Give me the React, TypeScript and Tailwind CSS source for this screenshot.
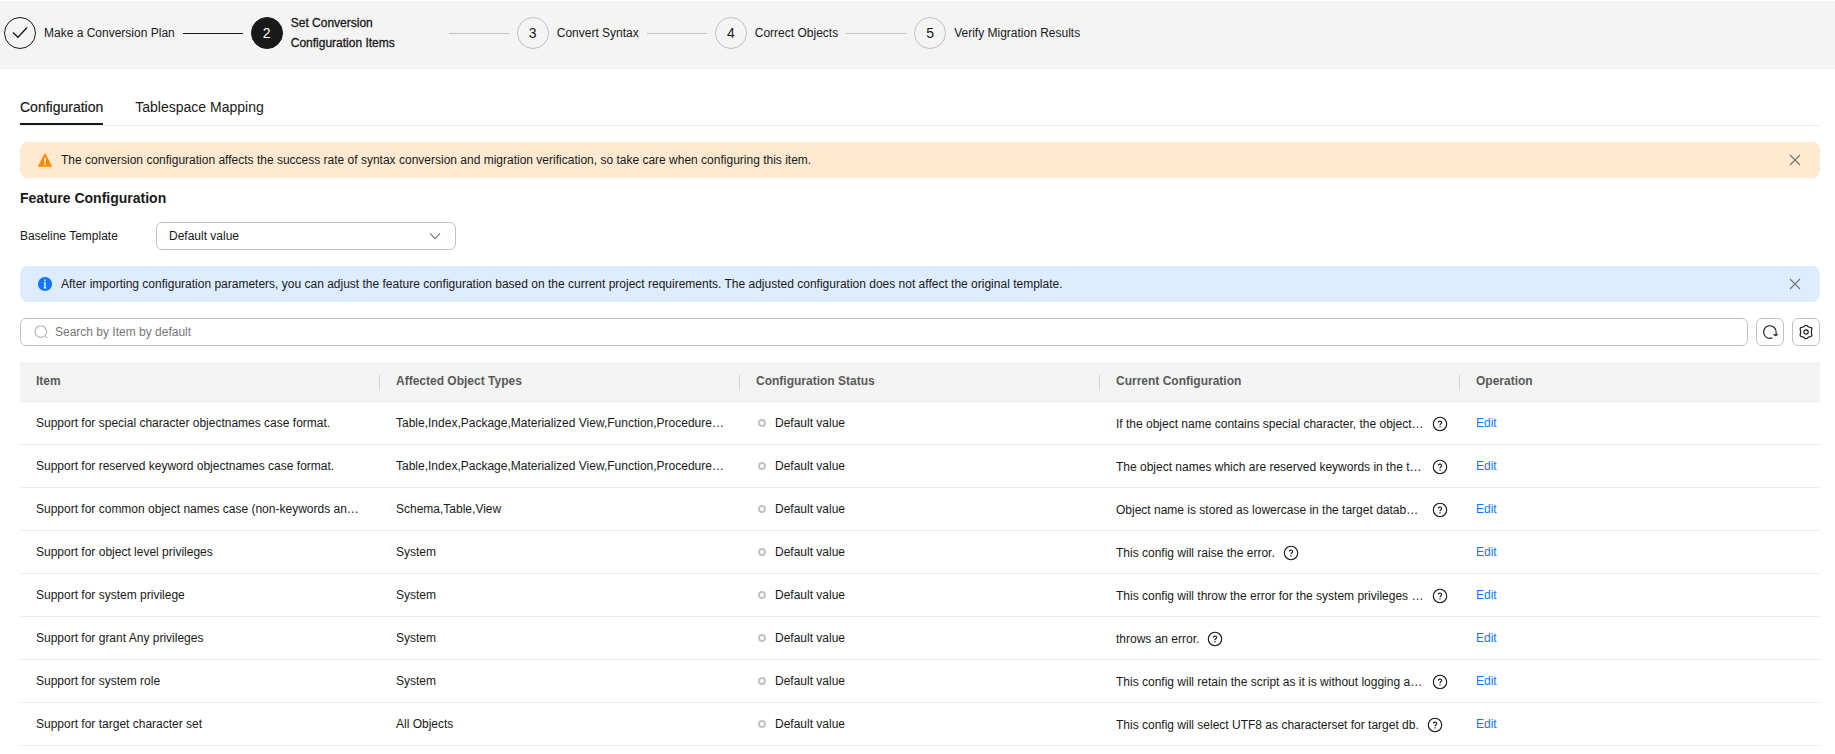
import { JSX, ReactNode, useState } from "react";

type StepState = "done" | "active" | "todo";

interface Step {
  label: string;
  state: StepState;
}

interface ConfigItem {
  name: string;
  objectTypes: string;
  current: string;
}

const steps: Step[] = [
  { label: "Make a Conversion Plan", state: "done" },
  { label: "Set Conversion Configuration Items", state: "active" },
  { label: "Convert Syntax", state: "todo" },
  { label: "Correct Objects", state: "todo" },
  { label: "Verify Migration Results", state: "todo" },
];

const columns: string[] = [
  "Item",
  "Affected Object Types",
  "Configuration Status",
  "Current Configuration",
  "Operation",
];

const items: ConfigItem[] = [
  {
    name: "Support for special character objectnames case format.",
    objectTypes: "Table,Index,Package,Materialized View,Function,Procedure…",
    current: "If the object name contains special character, the object…",
  },
  {
    name: "Support for reserved keyword objectnames case format.",
    objectTypes: "Table,Index,Package,Materialized View,Function,Procedure…",
    current: "The object names which are reserved keywords in the t…",
  },
  {
    name: "Support for common object names case (non-keywords an…",
    objectTypes: "Schema,Table,View",
    current: "Object name is stored as lowercase in the target datab…",
  },
  {
    name: "Support for object level privileges",
    objectTypes: "System",
    current: "This config will raise the error.",
  },
  {
    name: "Support for system privilege",
    objectTypes: "System",
    current: "This config will throw the error for the system privileges …",
  },
  {
    name: "Support for grant Any privileges",
    objectTypes: "System",
    current: "throws an error.",
  },
  {
    name: "Support for system role",
    objectTypes: "System",
    current: "This config will retain the script as it is without logging a…",
  },
  {
    name: "Support for target character set",
    objectTypes: "All Objects",
    current: "This config will select UTF8 as characterset for target db.",
  },
];

const circleStyles: Record<StepState, string> = {
  done: "border-[#191919]",
  active: "border-[#191919] bg-[#191919] text-white",
  todo: "border-[#c2c2c2]",
};

function CheckIcon(): JSX.Element {
  return (
    <svg width="16" height="16" viewBox="0 0 16 16" fill="none" stroke="#191919" strokeWidth="1.4">
      <path d="M1 7.6 L6 12.2 L15 2.6" />
    </svg>
  );
}

function WarningIcon(): JSX.Element {
  return (
    <svg width="16" height="16" viewBox="0 0 16 16">
      <path d="M8 1.8 L14.6 14.2 H1.4 Z" fill="#ff8800" stroke="#ff8800" strokeWidth="1" strokeLinejoin="round" />
      <path d="M8 6 V10.4 M8 11.5 V13" stroke="#fff" strokeWidth="1.6" />
    </svg>
  );
}

function InfoIcon(): JSX.Element {
  return (
    <svg width="16" height="16" viewBox="0 0 16 16">
      <circle cx="8" cy="8" r="7.1" fill="#1476ff" />
      <path d="M8 3.6 V5.2 M6.8 6.9 H8 V11.6 M6.8 11.8 H9.2" stroke="#fff" strokeWidth="1.3" fill="none" />
    </svg>
  );
}

function CloseIcon(): JSX.Element {
  return (
    <svg width="12" height="12" viewBox="0 0 12 12" stroke="#777" strokeWidth="1.2">
      <path d="M1 1 L11 11 M11 1 L1 11" />
    </svg>
  );
}

function HelpIcon(): JSX.Element {
  return (
    <svg width="16" height="16" viewBox="0 0 16 16" fill="none" stroke="#191919">
      <circle cx="8" cy="8" r="6.7" strokeWidth="1.1" />
      <path d="M6.3 6.6 C6.3 4.6 9.7 4.6 9.7 6.5 C9.7 7.7 8 7.8 8 9.3" strokeWidth="1.1" />
      <path d="M8 10.2 V11.4" strokeWidth="1.2" />
    </svg>
  );
}

function Alert({ tone, icon, children }: { tone: string; icon: ReactNode; children: ReactNode }): JSX.Element {
  return (
    <div role="alert" className={`flex h-9 items-center gap-2 rounded-lg pl-[17px] pr-[19px] ${tone}`}>
      {icon}
      <p className="flex-1">{children}</p>
      <button type="button" aria-label="Close" className="cursor-pointer">
        <CloseIcon />
      </button>
    </div>
  );
}

function Stepper(): JSX.Element {
  return (
    <ol className="mt-px flex items-center gap-2 bg-[#f4f4f4] pt-3 pb-4 pl-1">
      {steps.map((step, index) => (
        <li key={step.label} className="flex h-10 items-center gap-2">
          <span
            className={`flex size-8 shrink-0 items-center justify-center rounded-full border text-sm ${circleStyles[step.state]}`}
          >
            {step.state === "done" ? <CheckIcon /> : index + 1}
          </span>
          <span
            className={`max-w-[150px] leading-5 ${
              step.state === "active" ? "[-webkit-text-stroke:0.3px_#191919]" : ""
            }`}
          >
            {step.label}
          </span>
          {index < steps.length - 1 && (
            <span className={`h-px w-15 shrink-0 ${step.state === "done" ? "bg-[#191919]" : "bg-[#c2c2c2]"}`} />
          )}
        </li>
      ))}
    </ol>
  );
}

export default function App(): JSX.Element {
  const [template, setTemplate] = useState("default");
  const [query, setQuery] = useState("");

  return (
    <div className="min-h-screen bg-white font-['Liberation_Sans',Arial,sans-serif] text-xs text-[#191919]">
      <Stepper />

      <main className="pt-6 pr-[15px] pl-5">
        {/* Tabs */}
        <div role="tablist" className="flex gap-8 border-b border-[#ebebeb] text-sm">
          <button
            type="button"
            role="tab"
            aria-selected="true"
            className="h-8 border-b-2 border-[#191919] pb-0.5 [-webkit-text-stroke:0.2px_#191919]"
          >
            Configuration
          </button>
          <button type="button" role="tab" aria-selected="false" className="h-8 border-b-2 border-transparent pb-0.5">
            Tablespace Mapping
          </button>
        </div>

        <div className="mt-4">
          <Alert tone="bg-[#ffead1]" icon={<WarningIcon />}>
            The conversion configuration affects the success rate of syntax conversion and migration verification, so
            take care when configuring this item.
          </Alert>
        </div>

        <h2 className="mt-2.5 text-sm font-bold">Feature Configuration</h2>

        <div className="mt-3.5 flex items-center">
          <label htmlFor="template" className="w-34">
            Baseline Template
          </label>
          <div className="grid w-75 items-center">
            <select
              id="template"
              value={template}
              onChange={(e) => setTemplate(e.target.value)}
              className="col-start-1 row-start-1 h-7 w-full appearance-none rounded-md border border-[#c2c2c2] bg-white px-3"
            >
              <option value="default">Default value</option>
            </select>
            <svg
              width="12"
              height="12"
              viewBox="0 0 12 12"
              fill="none"
              stroke="#777"
              strokeWidth="1.2"
              className="pointer-events-none col-start-1 row-start-1 mr-[15px] justify-self-end"
            >
              <path d="M1 3.4 L6 8.6 L11 3.4" />
            </svg>
          </div>
        </div>

        <div className="mt-4">
          <Alert tone="bg-[#deecff]" icon={<InfoIcon />}>
            After importing configuration parameters, you can adjust the feature configuration based on the current
            project requirements. The adjusted configuration does not affect the original template.
          </Alert>
        </div>

        {/* Search bar */}
        <div className="mt-4 flex gap-2">
          <label className="flex h-7 flex-1 items-center gap-1.5 rounded-md border border-[#c2c2c2] pl-3">
            <svg width="16" height="16" viewBox="0 0 16 16" fill="none" stroke="#b5b5b5" strokeWidth="1.1">
              <circle cx="7.8" cy="7.6" r="5.8" />
              <path d="M12 11.8 L14.4 14.2" />
            </svg>
            <input
              type="text"
              aria-label="Search"
              placeholder="Search by Item by default"
              value={query}
              onChange={(e) => setQuery(e.target.value)}
              className="w-full flex-1 outline-none placeholder:text-[#777]"
            />
          </label>
          <button
            type="button"
            aria-label="Refresh"
            className="flex size-7 items-center justify-center rounded-md border border-[#c2c2c2]"
          >
            <svg width="16" height="16" viewBox="0 0 16 16" fill="none" stroke="#191919" strokeWidth="1.1">
              <path d="M10.4 13.8 A6.3 6.3 0 1 1 14.2 8.4 L13.8 11.4" />
              <path d="M11.4 10.6 L13.8 11.6 L15.6 10.2" />
            </svg>
          </button>
          <button
            type="button"
            aria-label="Settings"
            className="flex size-7 items-center justify-center rounded-md border border-[#c2c2c2]"
          >
            <svg width="16" height="16" viewBox="0 0 16 16" fill="none" stroke="#191919" strokeWidth="1.2">
              <path
                d="M6.9 1.8 Q8 1 9.1 1.8 L10.6 3 L12.7 3.4 Q14 3.8 13.9 5.2 L13.5 6.9 Q13.2 8 13.5 9.1 L13.9 10.8 Q14 12.2 12.7 12.6 L10.6 13 L9.1 14.2 Q8 15 6.9 14.2 L5.4 13 L3.3 12.6 Q2 12.2 2.1 10.8 L2.5 9.1 Q2.8 8 2.5 6.9 L2.1 5.2 Q2 3.8 3.3 3.4 L5.4 3 Z"
                strokeLinejoin="round"
              />
              <circle cx="8" cy="8" r="2.2" />
            </svg>
          </button>
        </div>

        {/* Feature table */}
        <table className="mt-4 w-full table-fixed border-separate border-spacing-0 text-left">
          <thead className="bg-[#f4f4f4] text-[#595959]">
            <tr>
              {columns.map((column, index) => (
                <th key={column} scope="col" className="h-10 border-b border-[#ebebeb] p-0 font-bold">
                  <div
                    className={`flex h-4 items-center pb-0.5 pl-4 ${
                      index < columns.length - 1 ? "border-r border-[#d9d9d9]" : ""
                    }`}
                  >
                    {column}
                  </div>
                </th>
              ))}
            </tr>
          </thead>
          <tbody>
            {items.map((item) => (
              <tr key={item.name}>
                <td className="h-[43px] truncate border-b border-[#ebebeb] px-4">{item.name}</td>
                <td className="truncate border-b border-[#ebebeb] px-4">{item.objectTypes}</td>
                <td className="border-b border-[#ebebeb] px-4">
                  <span className="flex items-center gap-[9px] pl-0.5">
                    <span className="size-2 rounded-full border-2 border-[#c2c2c2]" />
                    Default value
                  </span>
                </td>
                <td className="border-b border-[#ebebeb] pt-0.5 pr-3 pl-4">
                  <div className="flex items-center gap-2">
                    {/* shortened text fills the cell, so its help button sits at the right edge */}
                    <span className={`truncate ${item.current.endsWith("…") ? "flex-1" : ""}`}>{item.current}</span>
                    <button type="button" aria-label="Help" className="shrink-0">
                      <HelpIcon />
                    </button>
                  </div>
                </td>
                <td className="border-b border-[#ebebeb] px-4">
                  <a href="#edit" className="text-[#1476ff]">
                    Edit
                  </a>
                </td>
              </tr>
            ))}
          </tbody>
        </table>
      </main>
    </div>
  );
}
